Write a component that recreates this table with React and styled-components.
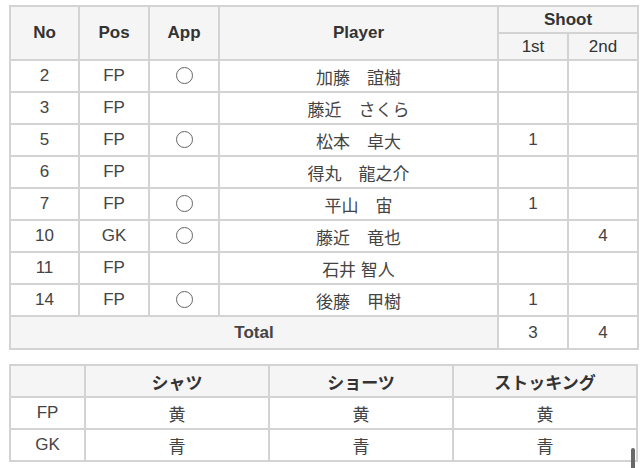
import React from 'react';
import styled, { createGlobalStyle } from 'styled-components';

let GlobalStyle = createGlobalStyle`
  html, body { margin: 0; padding: 0; background: #fff; }
  body {
    font-family: "Liberation Sans", "Noto Sans CJK JP", sans-serif;
    color: #333;
    overflow: hidden;
  }
`;

let Page = styled.div`
  position: relative;
  width: 640px;
  height: 468px;
  padding: 5px 0 0 9px;
  box-sizing: border-box;
  display: flex;
  flex-direction: column;
  gap: 14px;
`;

let Table = styled.table`
  border-collapse: collapse;
  table-layout: fixed;
  width: ${ props => props.width }px;
  font-size: 17px;
  border: 2px solid #d3d3d3;
`;

let Th = styled.th`
  background: #f5f5f5;
  border: 2px solid #d3d3d3;
  font-weight: ${ props => props.light ? 400 : 700 };
  color: #333;
  height: ${ props => props.h || 30 }px;
  padding: 0;
  text-align: center;
  vertical-align: middle;
`;

let Td = styled.td`
  background: ${ props => props.gray ? '#f5f5f5' : '#fff' };
  border: 2px solid #d3d3d3;
  color: #444;
  height: ${ props => props.h || 30 }px;
  padding: 0;
  text-align: center;
  vertical-align: middle;
  font-weight: ${ props => props.bold ? 700 : 400 };
`;

let Circle = styled.span`
  display: inline-block;
  width: 15px;
  height: 15px;
  border: 1px solid #666;
  border-radius: 50%;
  vertical-align: middle;
  margin-top: -2px;
`;

let ScrollThumb = styled.div`
  position: absolute;
  right: 5px;
  bottom: 0;
  width: 4px;
  height: 20px;
  background: #6a6a6a;
  border-radius: 2px 2px 0 0;
`;

const players = [
  { no: 2, pos: 'FP', app: true, name: '加藤　誼樹', s1: '', s2: '' },
  { no: 3, pos: 'FP', app: false, name: '藤近　さくら', s1: '', s2: '' },
  { no: 5, pos: 'FP', app: true, name: '松本　卓大', s1: '1', s2: '' },
  { no: 6, pos: 'FP', app: false, name: '得丸　龍之介', s1: '', s2: '' },
  { no: 7, pos: 'FP', app: true, name: '平山　宙', s1: '1', s2: '' },
  { no: 10, pos: 'GK', app: true, name: '藤近　竜也', s1: '', s2: '4' },
  { no: 11, pos: 'FP', app: false, name: '石井 智人', s1: '', s2: '' },
  { no: 14, pos: 'FP', app: true, name: '後藤　甲樹', s1: '1', s2: '' },
];

const uniforms = [
  { pos: 'FP', shirt: '黄', shorts: '黄', socks: '黄' },
  { pos: 'GK', shirt: '青', shorts: '青', socks: '青' },
];

function ShootTable(){
  return (
    <Table width={ 628 }>
      <colgroup>
        <col style={{ width: 69 }} />
        <col style={{ width: 70 }} />
        <col style={{ width: 70 }} />
        <col style={{ width: 279 }} />
        <col style={{ width: 70 }} />
        <col style={{ width: 70 }} />
      </colgroup>
      <thead>
        <tr>
          <Th rowSpan={2}>No</Th>
          <Th rowSpan={2}>Pos</Th>
          <Th rowSpan={2}>App</Th>
          <Th rowSpan={2}>Player</Th>
          <Th colSpan={2} h={ 25 }>Shoot</Th>
        </tr>
        <tr>
          <Th light h={ 25 }>1st</Th>
          <Th light h={ 25 }>2nd</Th>
        </tr>
      </thead>
      <tbody>
        {
          players.map(p => (
            <tr key={ p.no }>
              <Td>{ p.no }</Td>
              <Td>{ p.pos }</Td>
              <Td>{ p.app ? <Circle /> : null }</Td>
              <Td>{ p.name }</Td>
              <Td>{ p.s1 }</Td>
              <Td>{ p.s2 }</Td>
            </tr>
          ))
        }
        <tr>
          <Td gray bold colSpan={4} h={ 31 }>Total</Td>
          <Td h={ 31 }>3</Td>
          <Td h={ 31 }>4</Td>
        </tr>
      </tbody>
    </Table>
  )
}

function UniformTable(){
  return (
    <Table width={ 627 }>
      <colgroup>
        <col style={{ width: 75 }} />
        <col style={{ width: 184 }} />
        <col style={{ width: 184 }} />
        <col style={{ width: 184 }} />
      </colgroup>
      <thead>
        <tr>
          <Th></Th>
          <Th>シャツ</Th>
          <Th>ショーツ</Th>
          <Th>ストッキング</Th>
        </tr>
      </thead>
      <tbody>
        {
          uniforms.map(u => (
            <tr key={ u.pos }>
              <Td>{ u.pos }</Td>
              <Td>{ u.shirt }</Td>
              <Td>{ u.shorts }</Td>
              <Td>{ u.socks }</Td>
            </tr>
          ))
        }
      </tbody>
    </Table>
  )
}

export default function App(){
  return (
    <Page>
      <GlobalStyle />
      <ShootTable />
      <UniformTable />
      <ScrollThumb />
    </Page>
  )
}
